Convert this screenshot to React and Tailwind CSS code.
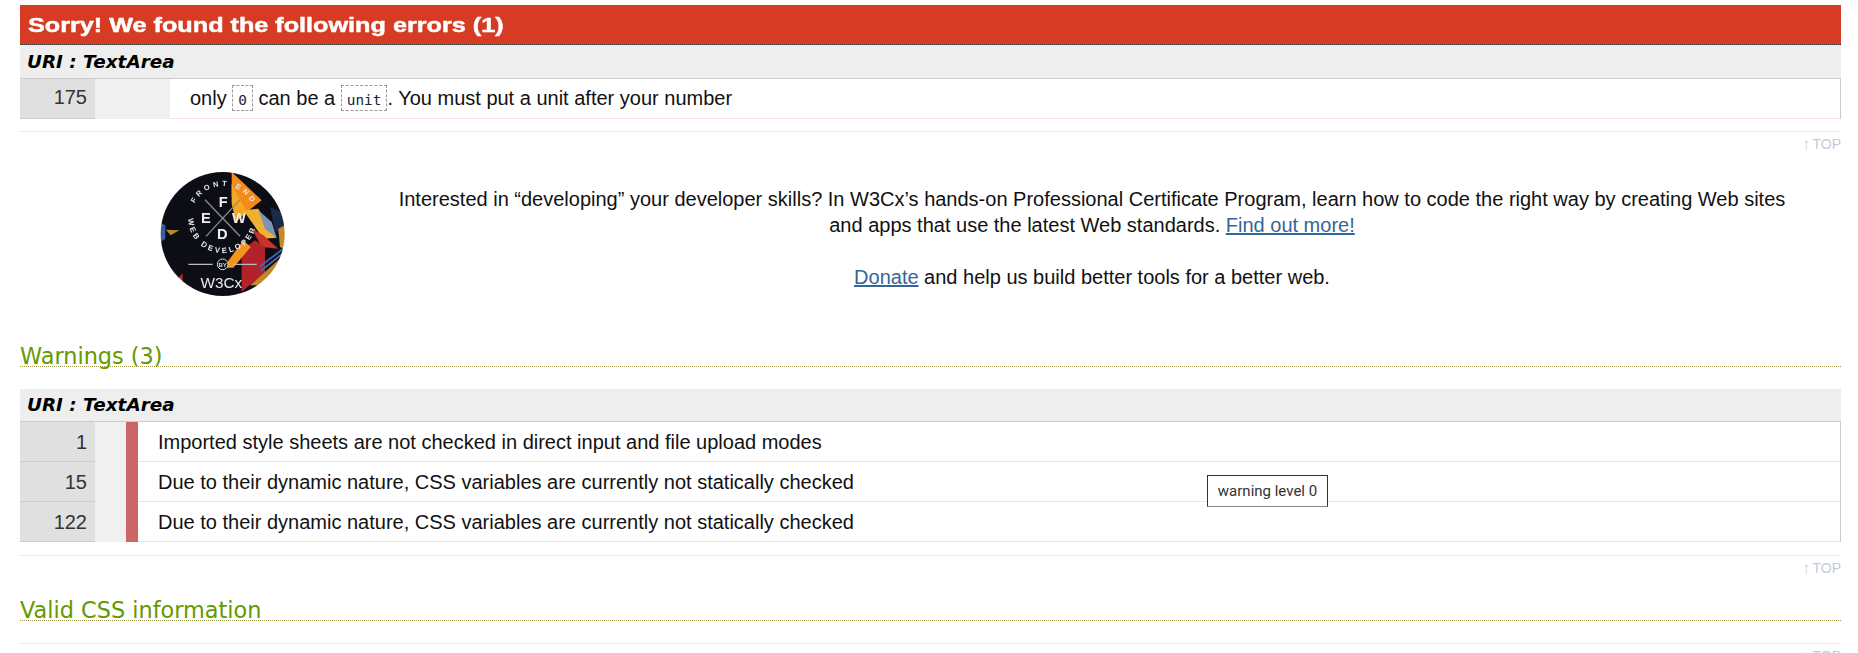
const sans = "font-['Liberation_Sans',Arial,sans-serif]";
const verdana = "font-['DejaVu_Sans',Verdana,sans-serif]";

function Top() {
  return (
    <div className="flex justify-end items-center h-[24px] text-[14px] text-[#c3c9dc] leading-none">
      <span className="text-[#c9d6e0] text-[17px] mr-[2px]">↑</span>TOP
    </div>
  );
}

function Rule() {
  return <div className="h-px bg-[#eaeaf4]" />;
}

function Code({ children }) {
  return (
    <code className="inline-block border border-dashed border-[#999] font-['DejaVu_Sans_Mono',monospace] text-[14.4px] leading-[18px] px-[5px] pt-[5px] pb-[1px] align-[-2px] text-[#223]">
      {children}
    </code>
  );
}

function UriHead({ tall }) {
  return (
    <div className={`${verdana} bg-[#eeeeee] ${tall ? "h-[34px]" : "h-[33px]"} flex items-center pl-[7px] text-[18.4px] font-bold italic text-black border-b border-[#cccccc]`}>
      URI : TextArea
    </div>
  );
}

function Row({ line, text }) {
  return (
    <div className="flex h-[40px]">
      <div className="w-[75px] pr-[8px] bg-[#e0e0e0] border-b border-[#cccccc] flex items-center justify-end text-[#333] text-[20px]">
        {line}
      </div>
      <div className="w-[31px] bg-[#f0f0f0]" />
      <div className="w-[12px] bg-[#cc6666]" />
      <div className="flex-1 flex items-center pl-[20px] text-[20px] text-[#111] border-b border-[#ffdddd]">
        {text}
      </div>
    </div>
  );
}

// coordinates follow a 3x crop of the badge, hence the large viewBox
function Logo() {
  return (
    <svg width="128" height="128" viewBox="87 59 384 384">
      <defs>
        <clipPath id="round">
          <circle cx="278" cy="251" r="186" />
        </clipPath>
        <filter id="soft">
          <feGaussianBlur stdDeviation="2" />
        </filter>
      </defs>
      <g clipPath="url(#round)" filter="url(#soft)">
        <rect x="87" y="59" width="384" height="384" fill="#0d1118" />
        <polygon points="305,65 395,150 350,185 318,165 305,140" fill="#f58a1f" />
        <polygon points="305,100 350,185 318,215 305,160" fill="#f7a822" />
        <polygon points="340,180 385,175 440,262 400,265" fill="#f0b030" />
        <polygon points="385,180 425,215 440,262 405,235" fill="#7d93b8" />
        <polygon points="365,235 400,255 445,295 395,290" fill="#c9302a" />
        <polygon points="420,170 470,190 470,270 435,240" fill="#1b2a48" />
        <polygon points="445,235 470,222 470,300 450,290" fill="#c58a2c" />
        <polygon points="335,300 375,270 405,290 405,365 335,425" fill="#b3202a" />
        <polygon points="280,352 340,270 362,290 310,352" fill="#f3951e" />
        <polygon points="360,405 455,320 455,350 385,405" fill="#c4862a" />
        <path d="M388 350 L460 295 M392 362 L460 308" stroke="#3f6cae" strokeWidth="5" fill="none" />
        <polygon points="85,215 106,225 106,265 85,280" fill="#3a5f9e" />
        <polygon points="108,238 148,240 122,255" fill="#b98a2a" />
        <polygon points="138,392 158,368 156,425" fill="#c52a2a" />

        <path id="arcTop" d="M194 160 A96 96 0 0 1 366 160" fill="none" />
        <path id="arcBottom" d="M175 205 A103 103 0 0 0 381 205" fill="none" />
        <text fontFamily="Liberation Sans, sans-serif" fontWeight="700" fontSize="22" fill="#e8e8e8" letterSpacing="10">
          <textPath href="#arcTop">FRONT END</textPath>
        </text>
        <text fontFamily="Liberation Sans, sans-serif" fontWeight="700" fontSize="23" fill="#e8e8e8" letterSpacing="7.5">
          <textPath href="#arcBottom">WEB DEVELOPER</textPath>
        </text>
        <path d="M225 148 L330 258 M330 148 L228 258" stroke="#8a8a8a" strokeWidth="4" />
        <g fontFamily="Liberation Sans, sans-serif" fontWeight="700" fill="#eeeeee" fontSize="44" textAnchor="middle">
          <text x="280" y="171">F</text>
          <text x="228" y="218">E</text>
          <text x="327" y="218">W</text>
          <text x="277" y="266">D</text>
        </g>
        <path d="M175 342 H248 M310 342 H380" stroke="#bbbbbb" strokeWidth="3.5" />
        <circle cx="278" cy="342" r="16" fill="#0d1118" stroke="#dddddd" strokeWidth="3" />
        <text x="278" y="349" fontSize="18" fontWeight="700" textAnchor="middle" fill="#dddddd" fontFamily="Liberation Sans, sans-serif">BY</text>
        <text x="274" y="413" fontSize="46" textAnchor="middle" fill="#e6e6e6" fontFamily="Liberation Sans, sans-serif">W3Cx</text>
      </g>
    </svg>
  );
}

function SectionTitle({ children }) {
  return (
    <h2 className={`${verdana} text-[22.4px] leading-[19px] text-[#669900] border-b border-dotted border-[#a09a4a] font-normal`}>
      {children}
    </h2>
  );
}

export default function App() {
  return (
    <div className={`${sans} h-[653px] overflow-hidden pl-[20px] pr-[17px] pt-[5px] bg-white relative`}>
      <h2 className="bg-[#d53c23] text-white text-[21px] font-bold h-[40px] flex items-center pl-[8px] border-b border-dotted border-[#333]">
        <span className="inline-block origin-left scale-x-[1.2] [-webkit-text-stroke:0.5px_white]">
          Sorry! We found the following errors (1)
        </span>
      </h2>
      <UriHead tall />
      <div className="flex h-[40px] border-r border-[#cccccc]">
        <div className="w-[75px] pr-[8px] pb-[3px] bg-[#e0e0e0] border-b border-[#cccccc] flex items-center justify-end text-[#333] text-[20px]">
          175
        </div>
        <div className="w-[75px] bg-[#f0f0f0]" />
        <div className="flex-1 flex items-center pl-[20px] pb-[2px] text-[20px] text-[#111] border-b border-[#ffdddd] whitespace-pre">
          only <Code>0</Code> can be a <Code>unit</Code>. You must put a unit after your number
        </div>
      </div>
      <div className="mt-[12px]">
        <Rule />
      </div>
      <Top />

      <div className="flex h-[172px]">
        <div className="w-[360px] pl-[139px] pt-[14px]">
          <Logo />
        </div>
        <div className="flex-1 text-center text-[20px] leading-[26px] text-[#111] pt-[30px] pr-[37px]">
          <p>
            Interested in “developing” your developer skills? In W3Cx’s hands-on Professional Certificate Program, learn how to code the right way by creating Web sites and apps that use the latest Web standards.{" "}
            <a className="text-[#336699] underline">Find out more!</a>
          </p>
          <p className="mt-[26px]">
            <a className="text-[#336699] underline">Donate</a> and help us build better tools for a better web.
          </p>
        </div>
      </div>

      <div className="mt-[19px]">
        <SectionTitle>Warnings (3)</SectionTitle>
      </div>
      <div className="mt-[22px]">
        <UriHead />
        <div className="border-r border-[#cccccc]">
          <Row line="1" text="Imported style sheets are not checked in direct input and file upload modes" />
          <Row line="15" text="Due to their dynamic nature, CSS variables are currently not statically checked" />
          <Row line="122" text="Due to their dynamic nature, CSS variables are currently not statically checked" />
        </div>
      </div>
      <div className="mt-[13px]">
        <Rule />
      </div>
      <Top />
      <div className="mt-[21px]">
        <SectionTitle>Valid CSS information</SectionTitle>
      </div>
      <div className="mt-[22px]">
        <Rule />
      </div>
      <Top />

      <div className="absolute left-[1207px] top-[475px] w-[121px] h-[32px] bg-white border border-[#333] border-b-[#888] flex items-center justify-center text-[15px] text-[#333] font-['Roboto',sans-serif]">
        warning level 0
      </div>
    </div>
  );
}
